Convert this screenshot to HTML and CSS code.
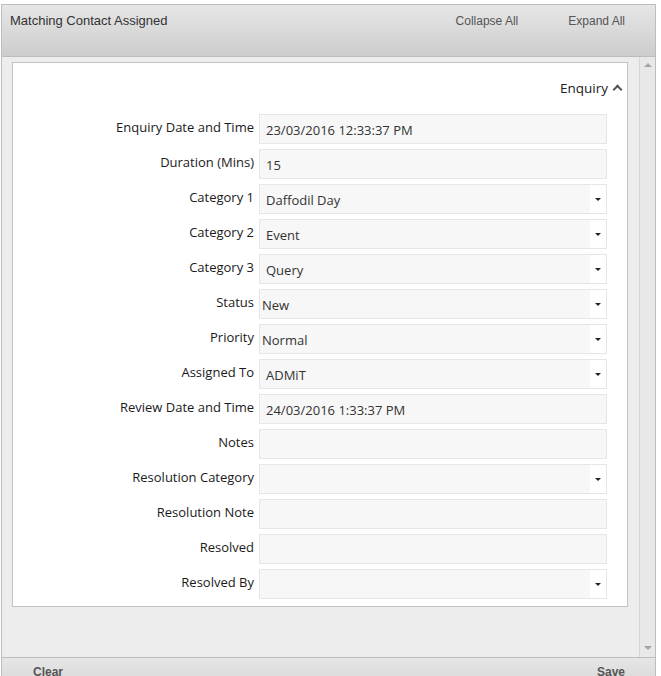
FILE: index.html
```html
<!DOCTYPE html>
<html lang="en">
<head>
    <meta charset="UTF-8">
    <title>Matching Contact Assigned</title>
    <link rel="stylesheet" href="styles.css">
</head>
<body>
    <div class="window">
        <div class="window-header">
            <div class="window-title">Matching Contact Assigned</div>
            <div class="header-links">
                <a href="#" class="header-link">Collapse All</a>
                <a href="#" class="header-link">Expand All</a>
            </div>
        </div>

        <div class="window-body">
            <div class="scroll-area">
                <div class="panel">
                    <div class="panel-title">Enquiry <span class="caret-up"></span></div>

                    <div class="form-row">
                        <label class="form-label">Enquiry Date and Time</label>
                        <div class="form-field">23/03/2016 12:33:37 PM</div>
                    </div>
                    <div class="form-row">
                        <label class="form-label">Duration (Mins)</label>
                        <div class="form-field">15</div>
                    </div>
                    <div class="form-row">
                        <label class="form-label">Category 1</label>
                        <div class="form-field select">Daffodil Day<span class="select-arrow"></span></div>
                    </div>
                    <div class="form-row">
                        <label class="form-label">Category 2</label>
                        <div class="form-field select">Event<span class="select-arrow"></span></div>
                    </div>
                    <div class="form-row">
                        <label class="form-label">Category 3</label>
                        <div class="form-field select">Query<span class="select-arrow"></span></div>
                    </div>
                    <div class="form-row">
                        <label class="form-label">Status</label>
                        <div class="form-field select native">New<span class="select-arrow"></span></div>
                    </div>
                    <div class="form-row">
                        <label class="form-label">Priority</label>
                        <div class="form-field select native">Normal<span class="select-arrow"></span></div>
                    </div>
                    <div class="form-row">
                        <label class="form-label">Assigned To</label>
                        <div class="form-field select">ADMiT<span class="select-arrow"></span></div>
                    </div>
                    <div class="form-row">
                        <label class="form-label">Review Date and Time</label>
                        <div class="form-field">24/03/2016 1:33:37 PM</div>
                    </div>
                    <div class="form-row">
                        <label class="form-label">Notes</label>
                        <div class="form-field"></div>
                    </div>
                    <div class="form-row">
                        <label class="form-label">Resolution Category</label>
                        <div class="form-field select"><span class="select-arrow"></span></div>
                    </div>
                    <div class="form-row">
                        <label class="form-label">Resolution Note</label>
                        <div class="form-field"></div>
                    </div>
                    <div class="form-row">
                        <label class="form-label">Resolved</label>
                        <div class="form-field"></div>
                    </div>
                    <div class="form-row">
                        <label class="form-label">Resolved By</label>
                        <div class="form-field select"><span class="select-arrow"></span></div>
                    </div>
                </div>
            </div>
            <div class="scrollbar">
                <span class="scroll-up"></span>
                <span class="scroll-down"></span>
            </div>
        </div>

        <div class="window-footer">
            <a href="#" class="footer-button">Clear</a>
            <a href="#" class="footer-button">Save</a>
        </div>
    </div>
</body>
</html>
```

FILE: styles.css
```css
body {
    margin: 0;
    background-color: #ffffff;
    font-family: "Liberation Sans", Arial, sans-serif;
    font-size: 12px;
    color: #333;
    overflow: hidden;
}

.window {
    width: 653px;
    margin: 4px 0 0 1px;
    border: 1px solid #bdbdbd;
    border-bottom: none;
}

.window-header {
    display: flex;
    justify-content: space-between;
    height: 51px;
    border-bottom: 1px solid #bcbcbc;
    background: linear-gradient(#e6e6e6, #cdcdcd);
}

.window-title {
    padding: 8px 0 0 8px;
    font-size: 13px;
    color: #333;
}

.header-links {
    display: flex;
    gap: 50px;
    padding: 9px 30px 0 0;
}

.header-link {
    color: #555;
    text-decoration: none;
}

.window-body {
    display: flex;
    height: 600px;
    background-color: #ededed;
}

.scroll-area {
    flex: 1;
    padding: 5px 11px 0 10px;
}

.panel {
    background-color: #fff;
    border: 1px solid #c3c3c3;
    padding: 14px 20px 7px 0;
    font-family: "Open Sans", "Noto Sans", sans-serif;
    font-size: 13px;
}

.panel-title {
    display: flex;
    justify-content: flex-end;
    align-items: center;
    gap: 6px;
    color: #222;
    font-size: 13.5px;
    height: 22px;
    margin-bottom: 15px;
    margin-right: -14px;
}

.caret-up {
    width: 5px;
    height: 5px;
    border-left: 2px solid #555;
    border-top: 2px solid #555;
    transform: rotate(45deg);
    margin-top: 3px;
}

.form-row {
    display: flex;
    gap: 5px;
    margin-bottom: 5px;
}

.form-row:last-child {
    margin-bottom: 0;
}

.form-label {
    width: 241px;
    text-align: right;
    color: #1a1a1a;
    line-height: 26px;
}

.form-field {
    flex: 1;
    position: relative;
    height: 28px;
    line-height: 31px;
    padding: 0 6px;
    background-color: #f7f7f7;
    border: 1px solid #e6e6e6;
    color: #333;
}

.form-field.native {
    padding-left: 2px;
}

.select-arrow {
    position: absolute;
    top: 0;
    right: 0;
    width: 16px;
    height: 28px;
    background-color: #fff;
}

.select-arrow::after {
    content: "";
    position: absolute;
    top: 13px;
    left: 5px;
    border-left: 3px solid transparent;
    border-right: 3px solid transparent;
    border-top: 3px solid #222;
}

.scrollbar {
    position: relative;
    width: 15px;
    border-left: 1px solid #d6d6d6;
    background-color: #e8e8e8;
}

.scroll-up,
.scroll-down {
    position: absolute;
    left: 4px;
    border-left: 4px solid transparent;
    border-right: 4px solid transparent;
}

.scroll-up {
    top: 6px;
    border-bottom: 4px solid #a5a5a5;
}

.scroll-down {
    bottom: 7px;
    border-top: 4px solid #a5a5a5;
}

.window-footer {
    display: flex;
    justify-content: space-between;
    height: 40px;
    border-top: 1px solid #bcbcbc;
    background: linear-gradient(#e6e6e6, #cdcdcd);
    padding: 7px 30px 0 31px;
}

.footer-button {
    color: #555;
    font-weight: bold;
    text-decoration: none;
}
```
